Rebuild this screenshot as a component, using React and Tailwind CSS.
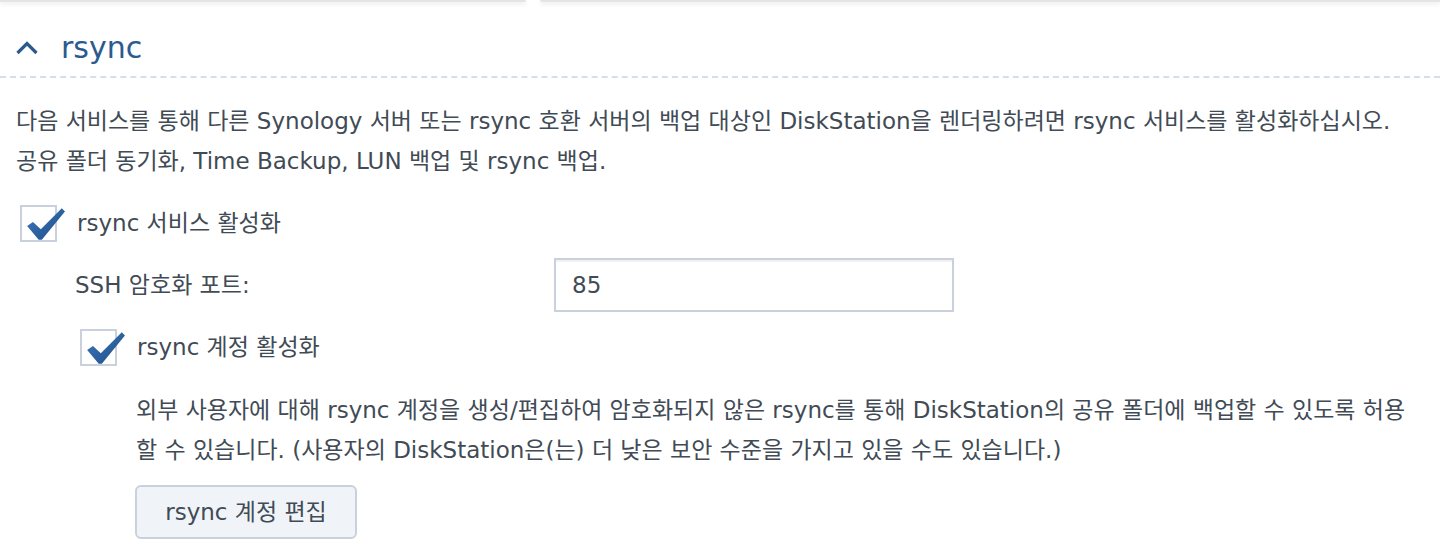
const font = { fontFamily: '"DejaVu Sans", "Noto Sans CJK KR", sans-serif' };

function Check() {
  return (
    <svg width="42" height="42" viewBox="0 0 40 40" className="absolute -top-[4px] left-[2px]">
      <defs>
        <linearGradient id="chk" x1="0" y1="0" x2="1" y2="1">
          <stop offset="0" stopColor="#3b78bd" />
          <stop offset="1" stopColor="#1f4d86" />
        </linearGradient>
      </defs>
      <path d="M3 22 L8.5 18 L16 25 L36 5 L39 8 L17 35 L14 35 Z" fill="url(#chk)" />
    </svg>
  );
}

function Checkbox({ label }) {
  return (
    <div className="flex items-center gap-5">
      <div className="relative w-[37px] h-[37px] border-2 border-[#c8d1dc] bg-white">
        <Check />
      </div>
      <span className="text-[23px] text-[#414b55]">{label}</span>
    </div>
  );
}

export default function App() {
  return (
    <div className="w-[1440px] h-[556px] bg-white overflow-hidden" style={font}>
      <div className="flex gap-[14px]">
        <div className="w-[526px] h-[2px] bg-[#e4e4e4] rounded-br-[6px] shadow-[0_2px_4px_rgba(0,0,0,0.12)]" />
        <div className="flex-1 h-[2px] bg-[#e4e4e4] rounded-bl-[6px] shadow-[0_2px_4px_rgba(0,0,0,0.12)]" />
      </div>
      <div className="flex items-center gap-[22px] pl-[15px] pt-[28px] pb-[10px] border-b-2 border-dashed border-[#d5dfea]">
        <svg width="24" height="16" viewBox="0 0 24 16">
          <path d="M2.5 13 L12 3.5 L21.5 13" fill="none" stroke="#2c5a8e" strokeWidth="3.2" />
        </svg>
        <span className="text-[30px] text-[#2c5a8e] leading-[36px]">rsync</span>
      </div>
      <div className="pl-[16px] pt-[23px] text-[23px] leading-[40px] text-[#414b55]">
        <p>다음 서비스를 통해 다른 Synology 서버 또는 rsync 호환 서버의 백업 대상인 DiskStation을 렌더링하려면 rsync 서비스를 활성화하십시오.</p>
        <p>공유 폴더 동기화, Time Backup, LUN 백업 및 rsync 백업.</p>
      </div>
      <div className="pl-[20px] pt-[24px]">
        <Checkbox label="rsync 서비스 활성화" />
      </div>
      <div className="flex items-center pl-[75px] pt-[16px]">
        <span className="w-[479px] text-[23px] text-[#414b55]">SSH 암호화 포트:</span>
        <div className="w-[400px] h-[54px] border-2 border-[#c8d1dc] bg-white flex items-center pl-[16px] text-[23px] text-[#414b55] shadow-[inset_0_2px_0_#f0f2f5]">
          85
        </div>
      </div>
      <div className="pl-[80px] pt-[17px]">
        <Checkbox label="rsync 계정 활성화" />
      </div>
      <div className="pl-[136px] pt-[24px] text-[23px] leading-[40px] text-[#414b55]">
        <p>외부 사용자에 대해 rsync 계정을 생성/편집하여 암호화되지 않은 rsync를 통해 DiskStation의 공유 폴더에 백업할 수 있도록 허용</p>
        <p>할 수 있습니다. (사용자의 DiskStation은(는) 더 낮은 보안 수준을 가지고 있을 수도 있습니다.)</p>
      </div>
      <div className="pl-[135px] pt-[15px]">
        <button className="w-[222px] h-[54px] rounded-[6px] border-2 border-[#c8d1dc] bg-[#f0f4f9] text-[23px] text-[#414b55]">
          rsync 계정 편집
        </button>
      </div>
    </div>
  );
}
